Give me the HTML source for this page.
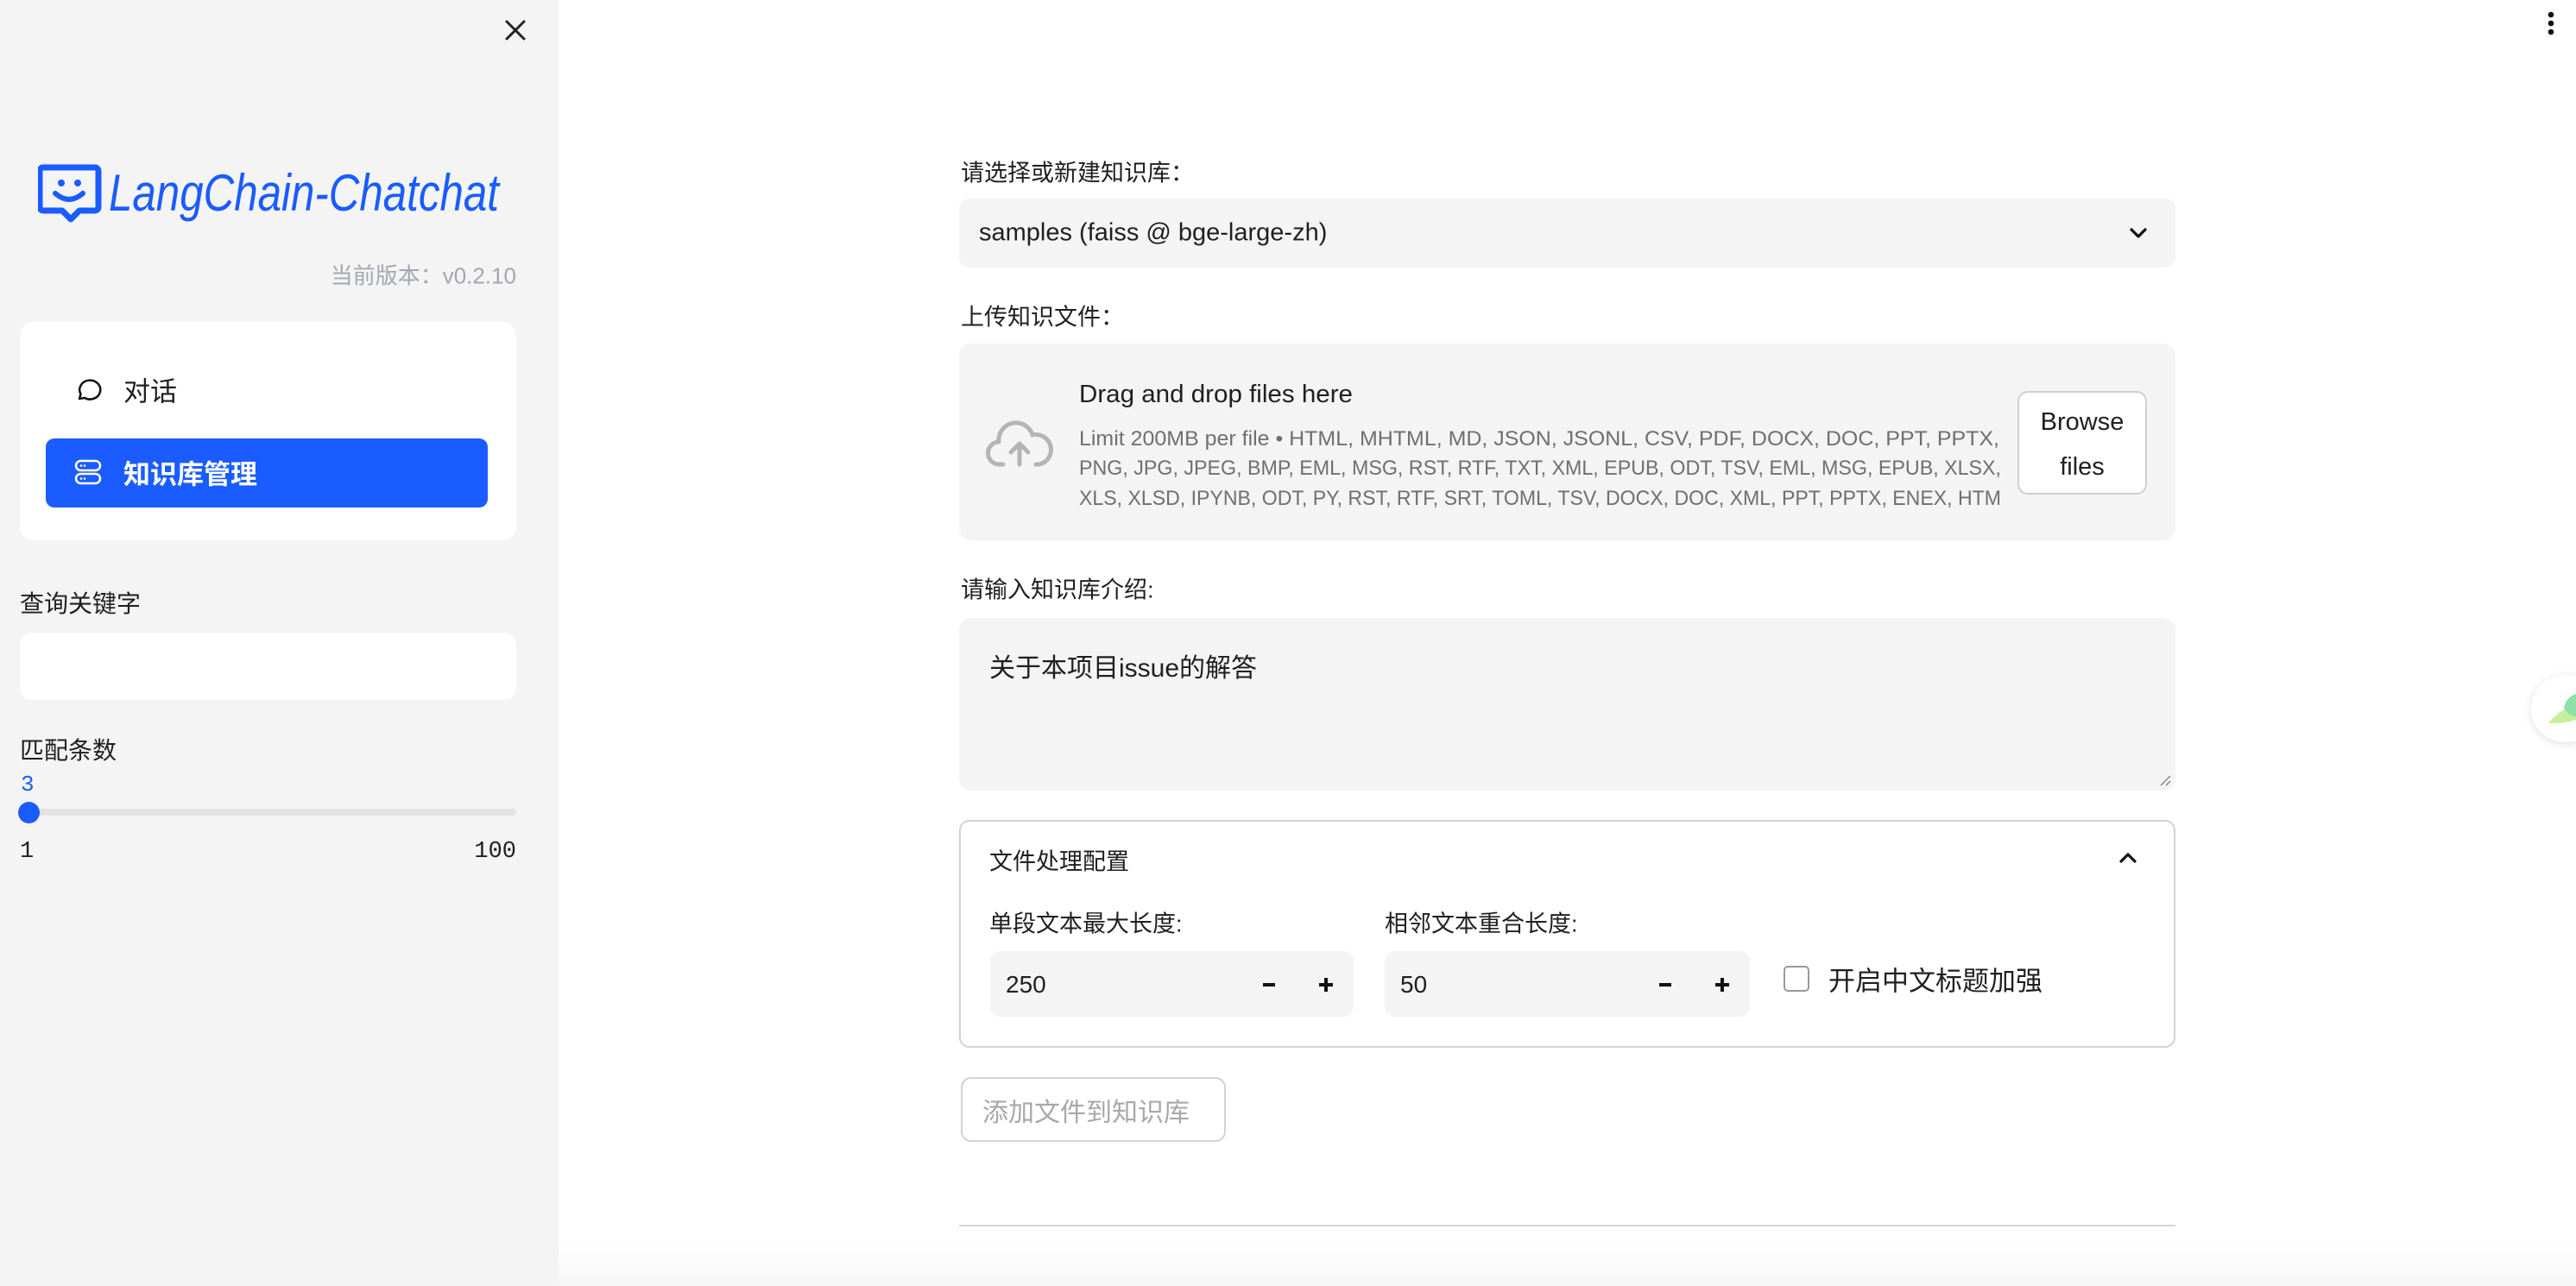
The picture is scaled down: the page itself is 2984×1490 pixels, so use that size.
<!DOCTYPE html>
<html><head><meta charset="utf-8">
<style>
*{box-sizing:border-box;margin:0;padding:0}
body{width:2984px;height:1490px;overflow:hidden;background:#fff;position:relative;font-family:"Liberation Sans","Noto Sans CJK SC",sans-serif;color:#1f1f1f}
.a{position:absolute;white-space:nowrap}
.mid{transform:translateY(-50%)}
#side{position:absolute;left:0;top:0;width:647px;height:1490px;background:#f4f4f4}
.box{position:absolute;background:#f4f4f4;border-radius:14px}
</style></head><body>
<div id="side">
  <svg class="a" style="left:584px;top:22px" width="26" height="26" viewBox="0 0 26 26"><path d="M3 3L23 23M23 3L3 23" stroke="#222" stroke-width="3" stroke-linecap="round"/></svg>
  <!-- logo -->
  <svg class="a" style="left:44px;top:188px" width="540" height="72" viewBox="0 0 540 72">
    <path d="M6 6h60a4 4 0 0 1 4 4v42a4 4 0 0 1-4 4H48l-10 10-10-10H6a4 4 0 0 1-4-4V10a4 4 0 0 1 4-4z" fill="none" stroke="#1a5cff" stroke-width="7" stroke-linejoin="round"/>
    <circle cx="27" cy="24" r="4" fill="#1a5cff"/><circle cx="46" cy="24" r="4" fill="#1a5cff"/>
    <path d="M20 36q16 14 32 0" fill="none" stroke="#1a5cff" stroke-width="6" stroke-linecap="round"/>
    <text x="82" y="56" font-family="Liberation Sans" font-style="italic" font-size="60" fill="#1a5cff" textLength="452" lengthAdjust="spacingAndGlyphs">LangChain-Chatchat</text>
  </svg>
  <div class="a mid" style="right:49px;top:318px;font-size:26px;color:#a3a7b3">当前版本：v0.2.10</div>
  <div class="a" style="left:23px;top:373px;width:575px;height:253px;background:#fff;border-radius:16px"></div>
  <svg class="a" style="left:86px;top:436px" width="32" height="30" viewBox="0 0 32 30"><path d="M6 26l1.5-5.5A12 11 0 1 1 12 25z" fill="none" stroke="#111" stroke-width="2.5" stroke-linejoin="round"/></svg>
  <div class="a mid" style="left:143px;top:451px;font-size:31px">对话</div>
  <div class="a" style="left:53px;top:508px;width:512px;height:80px;background:#1a5cff;border-radius:10px"></div>
  <svg class="a" style="left:86px;top:532px" width="32" height="30" viewBox="0 0 32 30"><rect x="2" y="2" width="28" height="11" rx="5.5" fill="none" stroke="#fff" stroke-width="2.5"/><rect x="2" y="17" width="28" height="11" rx="5.5" fill="none" stroke="#fff" stroke-width="2.5"/><circle cx="8" cy="7.5" r="1.3" fill="#fff"/><circle cx="12" cy="7.5" r="1.3" fill="#fff"/><circle cx="8" cy="22.5" r="1.3" fill="#fff"/><circle cx="12" cy="22.5" r="1.3" fill="#fff"/></svg>
  <div class="a mid" style="left:143px;top:547px;font-size:31px;color:#fff;font-weight:bold">知识库管理</div>
  <div class="a mid" style="left:23px;top:698px;font-size:28px">查询关键字</div>
  <div class="a" style="left:23px;top:733px;width:575px;height:78px;background:#fff;border-radius:14px"></div>
  <div class="a mid" style="left:23px;top:868px;font-size:28px">匹配条数</div>
  <div class="a mid" style="left:24px;top:909px;font-size:26px;color:#1a5cff;font-family:'Liberation Mono',monospace">3</div>
  <div class="a" style="left:23px;top:937px;width:575px;height:8px;background:#e2e2e2;border-radius:4px"></div>
  <div class="a" style="left:21px;top:929px;width:25px;height:25px;background:#1a5cff;border-radius:50%"></div>
  <div class="a mid" style="left:23px;top:987px;font-size:27px;font-family:'Liberation Mono',monospace">1</div>
  <div class="a mid" style="right:49px;top:987px;font-size:27px;font-family:'Liberation Mono',monospace">100</div>
</div>

<!-- menu dots -->
<svg class="a" style="left:2948px;top:12px" width="14" height="32"><circle cx="7" cy="5" r="3.3" fill="#111"/><circle cx="7" cy="15" r="3.3" fill="#111"/><circle cx="7" cy="25" r="3.3" fill="#111"/></svg>
<!-- leaf pill -->
<div class="a" style="left:2932px;top:782px;width:80px;height:78px;background:#fff;border-radius:39px;box-shadow:0 2px 10px rgba(0,0,0,.12)"></div>
<svg class="a" style="left:2950px;top:800px" width="34" height="40" viewBox="0 0 34 40"><path d="M2 38C10 28 20 20 34 18V34C22 38 10 38 2 38z" fill="#c5ef9c"/><path d="M20 20C22 10 28 6 34 4V30C28 30 22 26 20 20z" fill="#8fe0a8"/></svg>

<!-- main -->
<div class="a mid" style="left:1113px;top:198px;font-size:27px">请选择或新建知识库：</div>
<div class="box" style="left:1111px;top:230px;width:1409px;height:80px;border-radius:12px"></div>
<div class="a mid" style="left:1134px;top:270px;font-size:29px">samples (faiss @ bge-large-zh)</div>
<svg class="a" style="left:2466px;top:262px" width="22" height="16" viewBox="0 0 22 16"><path d="M3 4l8 8 8-8" fill="none" stroke="#111" stroke-width="3.2" stroke-linecap="round" stroke-linejoin="round"/></svg>

<div class="a mid" style="left:1113px;top:365px;font-size:27px">上传知识文件：</div>
<div class="box" style="left:1111px;top:398px;width:1409px;height:228px"></div>
<svg class="a" style="left:1142px;top:486px" width="78" height="56" viewBox="0 0 78 56"><path d="M20 52H16A13 13 0 0 1 15 26 20 20 0 0 1 54 18 15 15 0 0 1 62 52H58" fill="none" stroke="#b4b4b4" stroke-width="5" stroke-linecap="round" stroke-linejoin="round"/><path d="M39 52V30M29 38l10-10 10 10" fill="none" stroke="#b4b4b4" stroke-width="5" stroke-linecap="round" stroke-linejoin="round"/></svg>
<svg class="a" style="left:1250px;top:436px" width="1080" height="160">
  <text x="0" y="30" font-family="Liberation Sans" font-size="29" fill="#1f1f1f" textLength="317" lengthAdjust="spacingAndGlyphs">Drag and drop files here</text>
  <text x="0" y="80" font-family="Liberation Sans" font-size="24" fill="#6f6f6f" textLength="1066" lengthAdjust="spacingAndGlyphs">Limit 200MB per file • HTML, MHTML, MD, JSON, JSONL, CSV, PDF, DOCX, DOC, PPT, PPTX,</text>
  <text x="0" y="114" font-family="Liberation Sans" font-size="24" fill="#6f6f6f" textLength="1068" lengthAdjust="spacingAndGlyphs">PNG, JPG, JPEG, BMP, EML, MSG, RST, RTF, TXT, XML, EPUB, ODT, TSV, EML, MSG, EPUB, XLSX,</text>
  <text x="0" y="149" font-family="Liberation Sans" font-size="24" fill="#6f6f6f" textLength="1068" lengthAdjust="spacingAndGlyphs">XLS, XLSD, IPYNB, ODT, PY, RST, RTF, SRT, TOML, TSV, DOCX, DOC, XML, PPT, PPTX, ENEX, HTM</text>
</svg>
<div class="a" style="left:2337px;top:453px;width:150px;height:120px;background:#fff;border:2px solid #cfcfcf;border-radius:12px;font-size:29px;text-align:center;line-height:52px;padding-top:8px;white-space:normal">Browse<br>files</div>

<div class="a mid" style="left:1113px;top:681px;font-size:27px">请输入知识库介绍:</div>
<div class="box" style="left:1111px;top:716px;width:1409px;height:200px"></div>
<div class="a mid" style="left:1146px;top:771px;font-size:30px">关于本项目issue的解答</div>
<svg class="a" style="left:2500px;top:896px" width="16" height="16"><path d="M14 3L3 14M14 9L9 14" stroke="#888" stroke-width="1.5"/></svg>

<div class="a" style="left:1111px;top:950px;width:1409px;height:264px;border:2px solid #d2d2d2;border-radius:12px"></div>
<div class="a mid" style="left:1146px;top:996px;font-size:27px">文件处理配置</div>
<svg class="a" style="left:2454px;top:986px" width="22" height="16" viewBox="0 0 22 16"><path d="M3 12l8-8 8 8" fill="none" stroke="#111" stroke-width="3.2" stroke-linecap="round" stroke-linejoin="round"/></svg>
<div class="a mid" style="left:1146px;top:1068px;font-size:27px">单段文本最大长度:</div>
<div class="a mid" style="left:1604px;top:1068px;font-size:27px">相邻文本重合长度:</div>
<div class="box" style="left:1147px;top:1102px;width:421px;height:76px;border-radius:12px"></div>
<div class="box" style="left:1604px;top:1102px;width:423px;height:76px;border-radius:12px"></div>
<div class="a mid" style="left:1165px;top:1141px;font-size:28px">250</div>
<div class="a mid" style="left:1622px;top:1141px;font-size:28px">50</div>
<div class="a" style="left:1463px;top:1139px;width:14px;height:4px;background:#111"></div>
<div class="a" style="left:1528px;top:1139px;width:16px;height:4px;background:#111"></div>
<div class="a" style="left:1534px;top:1133px;width:4px;height:16px;background:#111"></div>
<div class="a" style="left:1922px;top:1139px;width:14px;height:4px;background:#111"></div>
<div class="a" style="left:1987px;top:1139px;width:16px;height:4px;background:#111"></div>
<div class="a" style="left:1993px;top:1133px;width:4px;height:16px;background:#111"></div>
<div class="a" style="left:2066px;top:1119px;width:30px;height:30px;border:2px solid #999;border-radius:5px;background:#fff"></div>
<div class="a mid" style="left:2118px;top:1134px;font-size:31px">开启中文标题加强</div>

<div class="a" style="left:1113px;top:1248px;width:307px;height:75px;border:2px solid #d2d2d2;border-radius:12px"></div>
<div class="a mid" style="left:1138px;top:1286px;font-size:30px;color:#a8a8a8">添加文件到知识库</div>
<div class="a" style="left:1111px;top:1419px;width:1409px;height:2px;background:#d5d5d5"></div>
<div class="a" style="left:647px;top:1440px;width:2337px;height:50px;background:linear-gradient(#fff,#f6f6f6)"></div>
</body></html>
